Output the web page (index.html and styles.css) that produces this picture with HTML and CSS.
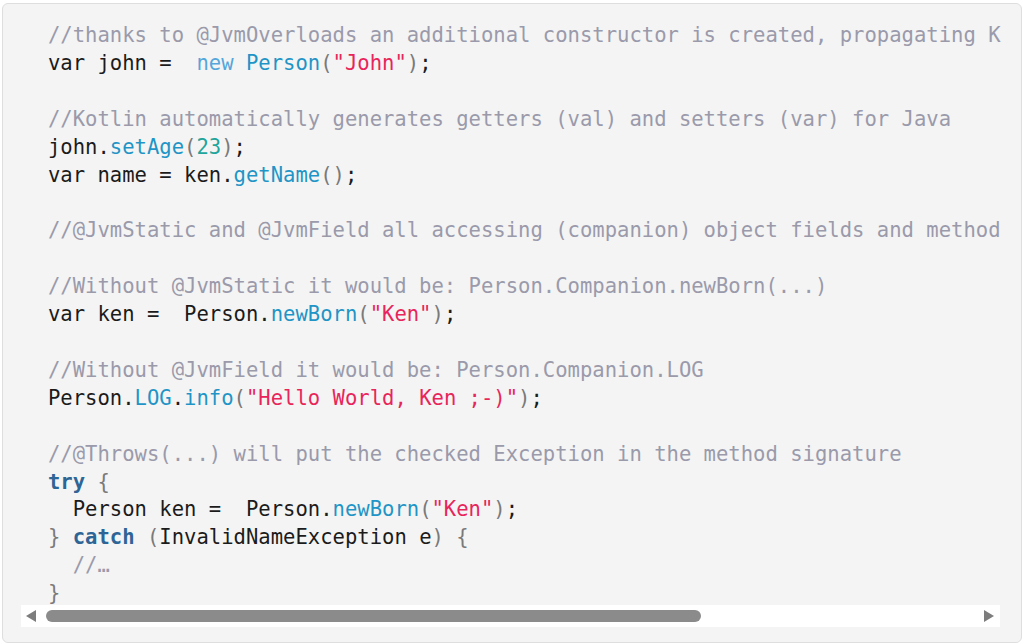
FILE: index.html
```html
<!DOCTYPE html>
<html lang="en">
<head>
<meta charset="utf-8">
<title>Kotlin Java interop</title>
<link rel="stylesheet" href="styles.css">
</head>
<body>
<div class="frame">
  <div class="code-wrap">
<pre class="code"><span class="c">//thanks to @JvmOverloads an additional constructor is created, propagating Kotlin's default arguments</span>
var john =  <span class="k">new</span> <span class="f">Person</span><span class="p">(</span><span class="s">"John"</span><span class="p">)</span>;

<span class="c">//Kotlin automatically generates getters (val) and setters (var) for Java</span>
john.<span class="f">setAge</span><span class="p">(</span><span class="n">23</span><span class="p">)</span>;
var name = ken.<span class="f">getName</span><span class="p">()</span>;

<span class="c">//@JvmStatic and @JvmField all accessing (companion) object fields and methods like statics</span>

<span class="c">//Without @JvmStatic it would be: Person.Companion.newBorn(...)</span>
var ken =  Person.<span class="f">newBorn</span><span class="p">(</span><span class="s">"Ken"</span><span class="p">)</span>;

<span class="c">//Without @JvmField it would be: Person.Companion.LOG</span>
Person.<span class="f">LOG</span>.<span class="f">info</span><span class="p">(</span><span class="s">"Hello World, Ken ;-)"</span><span class="p">)</span>;

<span class="c">//@Throws(...) will put the checked Exception in the method signature</span>
<span class="b">try</span> <span class="p">{</span>
  Person ken =  Person.<span class="f">newBorn</span><span class="p">(</span><span class="s">"Ken"</span><span class="p">)</span>;
<span class="p">}</span> <span class="b">catch</span> <span class="p">(</span>InvalidNameException e<span class="p">)</span> <span class="p">{</span>
  <span class="c">//…</span>
<span class="p">}</span></pre>
    <div class="scrollbar">
      <span class="arrow arrow-left"></span>
      <div class="track"><div class="thumb"></div></div>
      <span class="arrow arrow-right"></span>
    </div>
  </div>
</div>
</body>
</html>
```

FILE: styles.css
```css
html, body {
  margin: 0;
  padding: 0;
  background: #ffffff;
}

.frame {
  box-sizing: border-box;
  margin: 3px 2px 0 2px;
  height: 640px;
  border: 1px solid #dedede;
  border-radius: 6px;
  background: #f4f4f4;
  padding: 16px 21px 0 18px;
}

.code-wrap {
  width: 979px;
}

.code {
  margin: 0 -1px 0 0;
  padding: 2px 0 0 27px;
  height: 583px;
  overflow: hidden;
  white-space: pre;
  font-family: "DejaVu Sans Mono", "Liberation Mono", monospace;
  font-size: 20.55px;
  line-height: 27.9px;
  color: #1b1b1b;
}

.c { color: #9a9aab; }
.k { color: #55a6da; }
.f { color: #1f94c6; }
.s { color: #e8255a; }
.n { color: #1fa59c; }
.b { color: #2d6596; font-weight: bold; }
.p { color: #7a7a7a; }

.scrollbar {
  display: flex;
  align-items: center;
  height: 22px;
  background: #ffffff;
}

.track {
  flex: 1;
  height: 12px;
  padding: 0 10px 0 10px;
}

.thumb {
  width: 655px;
  height: 12px;
  border-radius: 6px;
  background: #8b8b8b;
}

.arrow {
  width: 0;
  height: 0;
  border-top: 6px solid transparent;
  border-bottom: 6px solid transparent;
}

.arrow-left {
  margin-left: 5px;
  border-right: 10px solid #7d7d7d;
}

.arrow-right {
  margin-right: 6px;
  border-left: 10px solid #7d7d7d;
}
```
